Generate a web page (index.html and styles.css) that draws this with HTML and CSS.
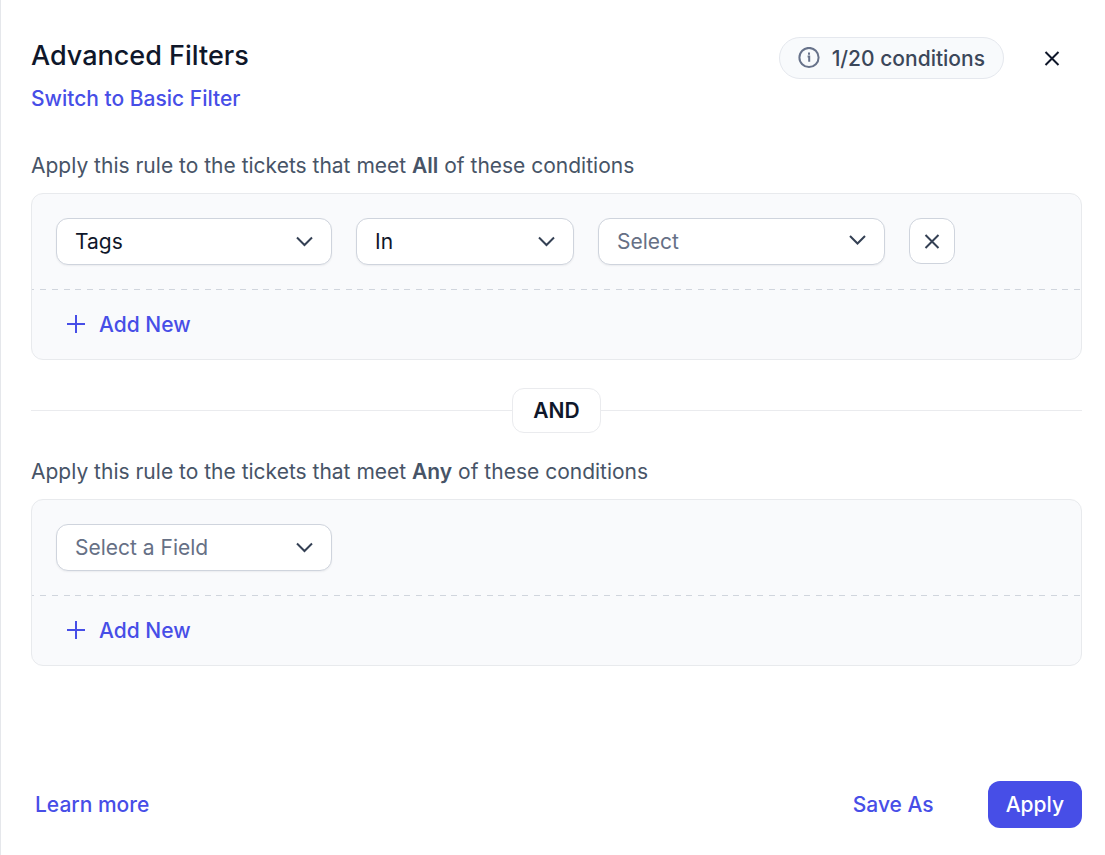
FILE: index.html
```html
<!DOCTYPE html>
<html lang="en">
<head>
  <meta charset="UTF-8">
  <meta name="viewport" content="width=device-width, initial-scale=1.0">
  <title>Advanced Filters</title>
  <link rel="stylesheet" href="styles.css">
</head>
<body>
  <form class="panel">
    <header class="header">
      <div class="titles">
        <h1>Advanced Filters</h1>
        <a href="#" class="link">Switch to Basic Filter</a>
      </div>
      <div class="header-actions">
        <div class="counter">
          <svg class="info-icon" width="22" height="22" viewBox="0 0 22 22" aria-hidden="true">
            <circle cx="11" cy="10.500" r="9.600"/>
            <path d="M9.600 9.500h1.600v5.200M11 5.500v2.200"/>
          </svg>
          <span>1/20 conditions</span>
        </div>
        <button type="button" class="close-button" aria-label="Close">
          <svg width="16" height="16" viewBox="0 0 16 16" aria-hidden="true"><path d="M1.5 2l13 13M14.5 2l-13 13"/></svg>
        </button>
      </div>
    </header>

    <main>
      <p class="rule">Apply this rule to the tickets that meet <strong>All</strong> of these conditions</p>
      <section class="group">
        <div class="conditions">
          <div class="select field">
            <select aria-label="Field">
              <option>Tags</option>
            </select>
            <svg width="18" height="12" viewBox="0 0 18 12" aria-hidden="true"><path d="M1 1.5L8.5 9 16 1.5"/></svg>
          </div>
          <div class="select operator">
            <select aria-label="Operator">
              <option>In</option>
            </select>
            <svg width="18" height="12" viewBox="0 0 18 12" aria-hidden="true"><path d="M1 1.5L8.5 9 16 1.5"/></svg>
          </div>
          <div class="select value">
            <select class="placeholder" aria-label="Value">
              <option>Select</option>
            </select>
            <svg width="18" height="14" viewBox="0 0 18 14" aria-hidden="true"><path d="M1 1L8.5 8.500 16 1"/></svg>
          </div>
          <button type="button" class="remove-button" aria-label="Remove condition">
            <svg width="16" height="16" viewBox="0 0 16 16" aria-hidden="true"><path d="M1.5 2l13 13M14.5 2l-13 13"/></svg>
          </button>
        </div>
        <div class="group-footer">
          <button type="button" class="add-button">
            <svg width="18" height="20" viewBox="0 0 18 20" aria-hidden="true"><path d="M9 0v18M0 9h18"/></svg>
            Add New
          </button>
        </div>
      </section>

      <div class="divider"><span>AND</span></div>

      <p class="rule">Apply this rule to the tickets that meet <strong>Any</strong> of these conditions</p>
      <section class="group">
        <div class="conditions">
          <div class="select field">
            <select class="placeholder" aria-label="Field">
              <option>Select a Field</option>
            </select>
            <svg width="18" height="12" viewBox="0 0 18 12" aria-hidden="true"><path d="M1 1.5L8.5 9 16 1.5"/></svg>
          </div>
        </div>
        <div class="group-footer">
          <button type="button" class="add-button">
            <svg width="18" height="20" viewBox="0 0 18 20" aria-hidden="true"><path d="M9 0v18M0 9h18"/></svg>
            Add New
          </button>
        </div>
      </section>
    </main>

    <footer class="footer">
      <a href="#" class="link">Learn more</a>
      <div class="footer-actions">
        <button type="button" class="save-button">Save As</button>
        <button type="submit" class="apply-button">Apply</button>
      </div>
    </footer>
  </form>
</body>
</html>
```
FILE: styles.css
```css
* {
  box-sizing: border-box;
}

body {
  margin: 0;
  font-family: Inter, "Liberation Sans", sans-serif;
  font-size: 21px;
  line-height: 31px;
  color: #0f172a;
  background: #fff;
}

button,
select {
  font: inherit;
  cursor: pointer;
}

svg {
  display: block;
  fill: none;
  stroke: currentColor;
  stroke-width: 2;
}

.panel {
  display: flex;
  flex-direction: column;
  min-height: 100vh;
  padding: 36px 23px 27px 30px;
  border-left: 1px solid #e5e7eb;
}

.header {
  display: flex;
  justify-content: space-between;
  align-items: flex-start;
  margin-bottom: 36px;
}

h1 {
  margin: 0 0 7px;
  font-size: 27px;
  font-weight: 500;
  line-height: 40px;
}

.link {
  display: block;
  font-weight: 500;
  color: #474ee7;
  text-decoration: none;
}

.header-actions {
  display: flex;
  align-items: center;
  gap: 32px;
}

.counter {
  display: flex;
  align-items: center;
  gap: 12px;
  height: 42px;
  margin-top: 1px;
  padding: 0 18px;
  border: 1px solid #e5e8ee;
  border-radius: 21px;
  background: #f8fafc;
  font-weight: 500;
  color: #3b475a;
}

.info-icon {
  color: #67728a;
}

.close-button {
  display: grid;
  place-items: center;
  width: 32px;
  height: 32px;
  margin-right: 14px;
  padding: 0;
  border: 0;
  background: none;
  color: #0f172a;
}

.rule {
  margin: 0 0 12px;
  color: #475467;
}

.rule strong {
  font-weight: 600;
}

.group {
  border: 1px solid #e8eaed;
  border-radius: 12px;
  background: #f9fafc;
}

.conditions {
  display: flex;
  gap: 24px;
  padding: 24px;
}

.select {
  display: grid;
  align-items: center;
}

.select select,
.select svg {
  grid-area: 1 / 1;
}

.select select {
  appearance: none;
  width: 100%;
  height: 47px;
  padding: 0 48px 0 18px;
  border: 1px solid #cfd4dd;
  border-radius: 12px;
  background: #fff;
  box-shadow: 0 1px 2px rgba(15, 23, 42, 0.06);
  color: #0f172a;
}

.select .placeholder {
  color: #667085;
}

.select svg {
  justify-self: end;
  margin-right: 18px;
  color: #344054;
  pointer-events: none;
}

.field {
  width: 276px;
}

.operator {
  width: 218px;
}

.value {
  width: 287px;
}

.remove-button {
  display: grid;
  place-items: center;
  width: 46px;
  height: 46px;
  padding: 0;
  border: 1px solid #cfd4dd;
  border-radius: 12px;
  background: #fff;
  color: #344054;
}

/* dashed separator, 6px dashes */
.group-footer {
  padding: 20px 35px 19px;
  background: linear-gradient(90deg, #d0d5dd 6px, transparent 6px 12px, #d0d5dd 12px 18px, transparent 18px 24px, #d0d5dd 24px 30px, transparent 30px 35px, #d0d5dd 35px 41px, transparent 41px) 8px 0 / 47px 1px repeat-x;
}

.add-button {
  display: flex;
  align-items: center;
  gap: 14px;
  padding: 0;
  border: 0;
  background: none;
  font-weight: 500;
  color: #474ee7;
}

.divider {
  display: flex;
  align-items: center;
  margin: 28px 0 23px;
}

.divider::before,
.divider::after {
  content: "";
  flex: 1;
  height: 1px;
  background: #eaebee;
}

.divider span {
  padding: 6px 20px;
  border: 1px solid #eaebee;
  border-radius: 12px;
  font-weight: 600;
}

.footer {
  display: flex;
  justify-content: space-between;
  align-items: center;
  margin-top: auto;
  padding-left: 4px;
}

.footer-actions {
  display: flex;
  gap: 36px;
}

.save-button,
.apply-button {
  height: 47px;
  padding: 0 18px;
  border: 0;
  border-radius: 12px;
  background: none;
  font-weight: 500;
  color: #474ee7;
}

.apply-button {
  background: #474ee7;
  color: #fff;
}
```
